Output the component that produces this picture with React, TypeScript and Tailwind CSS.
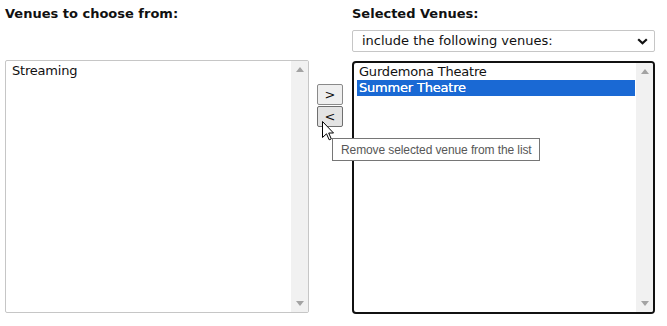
import { ReactNode } from 'react';

const font = 'font-["DejaVu_Sans",Verdana,sans-serif]';

const ScrollTrack = () => (
  <div className="flex w-[17px] flex-col items-center justify-between bg-[#f1f1f1] py-[6px]">
    <svg width="8" height="5" viewBox="0 0 8 5">
      <path d="M0 5 L4 0 L8 5 Z" fill="#a3a3a3" />
    </svg>
    <svg width="8" height="5" viewBox="0 0 8 5">
      <path d="M0 0 L8 0 L4 5 Z" fill="#a3a3a3" />
    </svg>
  </div>
);

const ListBox = ({ focused, children }: { focused?: boolean; children: ReactNode }) => (
  <div
    className={
      focused
        ? 'flex h-[253px] overflow-hidden rounded-[4px] border-2 border-[#111]'
        : 'flex h-[253px] overflow-hidden rounded-[2px] border border-[#c6c6c6]'
    }
  >
    <div className={focused ? 'flex-1 pl-[3px] pr-[1px] pt-[1px]' : 'flex-1 pl-[4px] pr-[2px] pt-[2px]'}>
      {children}
    </div>
    <ScrollTrack />
  </div>
);

const Option = ({ label, selected }: { label: string; selected?: boolean }) => (
  <div
    className={
      selected
        ? 'h-[16px] bg-[#1a69d4] px-[2px] text-[13px] leading-[16px] tracking-[-0.2px] text-white [text-shadow:0_0_0.4px_#fff]'
        : 'h-[16px] px-[2px] text-[13px] leading-[16px] tracking-[-0.2px] text-[#111]'
    }
  >
    {label}
  </div>
);

const MoveButton = ({ label, hover }: { label: string; hover?: boolean }) => (
  <button
    className={
      hover
        ? 'flex h-[21px] w-[26px] items-center justify-center rounded-[2px] border border-[#6f6f6f] bg-[#e3e3e3] text-[13px] text-[#111]'
        : 'flex h-[21px] w-[26px] items-center justify-center rounded-[2px] border border-[#8a8a8a] bg-[#efefef] text-[13px] text-[#111]'
    }
  >
    {label}
  </button>
);

const App = () => {
  return (
    <div className={`${font} relative h-[326px] w-[667px] bg-white pl-[5px] pt-[6px]`}>
      <div className="grid grid-cols-[304px_26px_304px] gap-x-[8px]">
        <h2 className="col-start-1 row-start-1 h-[24px] text-[13px] leading-[16px] font-bold text-[#111]">
          Venues to choose from:
        </h2>
        <h2 className="col-start-3 row-start-1 ml-[1px] h-[24px] text-[13px] leading-[16px] font-bold text-[#111]">
          Selected Venues:
        </h2>

        <div className="col-start-3 row-start-2 ml-[1px] flex h-[22px] items-center justify-between rounded-[2px] border border-[#c6c6c6] pl-[9px] pr-[6px] text-[13px] text-[#111]">
          <span>include the following venues:</span>
          <svg width="11" height="7" viewBox="0 0 11 7">
            <path d="M1.2 1.2 L5.5 5.3 L9.8 1.2" fill="none" stroke="#111" strokeWidth="2.2" />
          </svg>
        </div>

        <div className="col-start-1 row-start-3 mt-[8px]">
          <ListBox>
            <Option label="Streaming" />
          </ListBox>
        </div>

        <div className="col-start-2 row-start-3 mt-[32px] flex flex-col gap-[1px]">
          <MoveButton label=">" />
          <MoveButton label="<" hover />
        </div>

        <div className="col-start-3 row-start-3 ml-[1px] mt-[9px]">
          <ListBox focused>
            <Option label="Gurdemona Theatre" />
            <Option label="Summer Theatre" selected />
          </ListBox>
        </div>
      </div>

      {/* mouse pointer */}
      <svg className="absolute left-[322px] top-[121px]" width="13" height="20" viewBox="0 0 13 20">
        <path
          d="M0.5 0.5 V16.5 L4.5 12.8 L7.2 18.8 L9.3 17.9 L6.7 12 H11.5 Z"
          fill="#fff"
          stroke="#000"
          strokeWidth="1"
          strokeLinejoin="round"
        />
      </svg>

      {/* tooltip */}
      <div className='absolute left-[332px] top-[138px] flex h-[23px] w-[208px] items-center border border-[#767676] bg-white pl-[8px] font-["Liberation_Sans",Arial,sans-serif] text-[12px] tracking-[-0.1px] text-[#575757]'>
        Remove selected venue from the list
      </div>
    </div>
  );
};

export default App;
